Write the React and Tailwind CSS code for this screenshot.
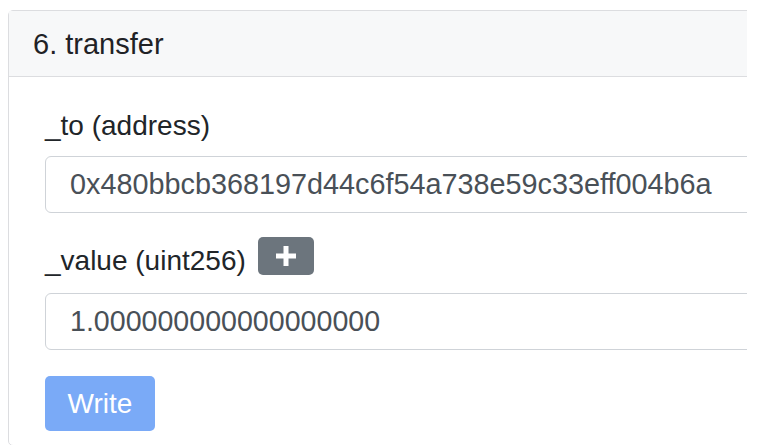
export default function App() {
  return (
    <div className="min-h-[445px] w-[764px] bg-white pt-[10px] pl-[8px] font-['Liberation_Sans',Arial,sans-serif]">
      <div className="w-[739px] overflow-hidden">
        <div className="w-[780px] rounded-[5px] border border-[#dcdde0] bg-white">
          <div className="flex h-[66px] items-center border-b border-[#dcdde0] bg-[#f7f8f9] pl-[24px] text-[29px] leading-[34px] text-[#1f2226]">
            6. transfer
          </div>
          <div className="pt-[32px] pl-[36px] pb-[14px]">
            <div className="text-[28px] leading-[34px] text-[#212529]">_to (address)</div>
            <div className="mt-[13px] flex h-[57px] items-center rounded-[6px] border border-[#cfd3d8] pl-[24px] text-[28.8px] text-[#495057]">
              0x480bbcb368197d44c6f54a738e59c33eff004b6a
            </div>
            <div className="mt-[24px] flex items-start">
              <div className="mt-[7px] text-[28px] leading-[34px] text-[#212529]">_value (uint256)</div>
              <div className="ml-[12px] flex h-[38px] w-[56px] items-center justify-center rounded-[5px] bg-[#6c757d]">
                <svg width="24" height="24" viewBox="0 0 24 24">
                  <path d="M12 2v20M2 12h20" stroke="white" strokeWidth="5" />
                </svg>
              </div>
            </div>
            <div className="mt-[15px] flex h-[57px] items-center rounded-[6px] border border-[#cfd3d8] pl-[24px] text-[28.6px] text-[#495057]">
              1.000000000000000000
            </div>
            <div className="mt-[26px] flex h-[55px] w-[110px] items-center justify-center rounded-[5px] bg-[#7aaaf7] text-[28px] text-white">
              Write
            </div>
          </div>
        </div>
      </div>
    </div>
  );
}
